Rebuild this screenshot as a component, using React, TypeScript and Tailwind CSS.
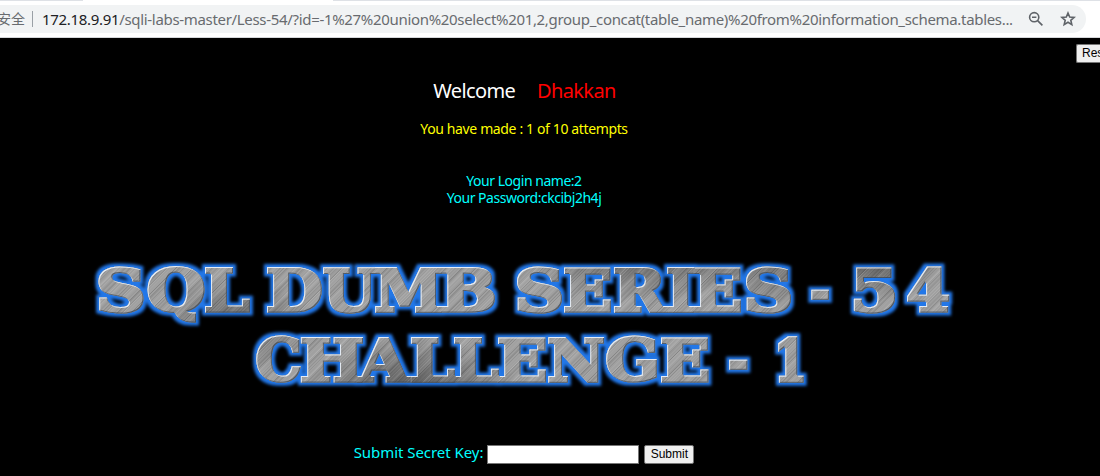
import { useMemo } from "react";

type Glyph = [char: string, left: number, right: number, top?: number, bottom?: number];

const CAP = 46;

// Each glyph: character, left and right ink edges, and ink top and bottom where they differ from cap height.
const LINE_ONE: Glyph[] = [
  ["S", 98.5, 143.5, -1, 47],
  ["Q", 147.5, 204.5, -1, 56],
  ["L", 205, 250],
  ["D", 267, 322],
  ["U", 323, 377, 0, 47],
  ["M", 375, 442],
  ["B", 441, 495],
  ["S", 517, 562, -1, 47],
  ["E", 564, 611],
  ["R", 614, 668],
  ["I", 667, 694],
  ["E", 694, 741],
  ["S", 746, 791, -1, 47],
  ["-", 811, 829, 23, 33],
  ["5", 854, 895.5, 0, 47],
  ["4", 907, 949],
];

const LINE_TWO: Glyph[] = [
  ["C", 256, 300.5, -2, 46],
  ["H", 301, 363],
  ["A", 357, 411],
  ["L", 411, 455],
  ["L", 454, 499],
  ["E", 498, 546],
  ["N", 548, 604],
  ["G", 606, 656.5, -2, 46],
  ["E", 661, 708.5],
  ["-", 729, 747.5, 23, 33],
  ["1", 778, 804],
];

const STROKE = 3.4;

function placeGlyphs(line: Glyph[], y: number) {
  const ctx = document.createElement("canvas").getContext("2d")!;
  ctx.font = 'bold 200px "DejaVu Serif", serif';
  return line.map(([char, left, right, top = 0, bottom = CAP]) => {
    const m = ctx.measureText(char);
    const inkW = m.actualBoundingBoxRight + m.actualBoundingBoxLeft;
    const inkH = m.actualBoundingBoxAscent + m.actualBoundingBoxDescent;
    const sx = (right - left - STROKE) / inkW;
    const sy = (bottom - top - STROKE) / inkH;
    const tx = left + STROKE / 2 + m.actualBoundingBoxLeft * sx;
    const ty = y + top + STROKE / 2 + m.actualBoundingBoxAscent * sy;
    return { char, transform: `matrix(${sx} 0 0 ${sy} ${tx} ${ty})` };
  });
}

// Diagonal scratches of the brushed metal, light and dark, spread unevenly.
const SCRATCHES = Array.from({ length: 420 }, (_, i) => ({
  x: -60 + i * 2.5 + ((i * 7) % 5) * 0.4,
  light: (i * 13) % 7 < 3,
  opacity: 0.05 + ((i * 11) % 6) * 0.026,
}));

const SHADES = [
  { cx: 235, cy: 325, rx: 80, ry: 50, opacity: 0.5 },
  { cx: 410, cy: 392, rx: 110, ry: 55, opacity: 0.65 },
  { cx: 640, cy: 256, rx: 120, ry: 45, opacity: 0.5 },
  { cx: 770, cy: 266, rx: 75, ry: 45, opacity: 0.35 },
  { cx: 875, cy: 258, rx: 70, ry: 42, opacity: 0.65 },
];

function Banner() {
  const glyphs = useMemo(() => [...placeGlyphs(LINE_ONE, 267), ...placeGlyphs(LINE_TWO, 336.5)], []);
  return (
    <svg width="872" height="146" viewBox="88 250 872 146" className="block shrink-0">
      <defs>
        <filter id="glow" filterUnits="userSpaceOnUse" x="80" y="245" width="890" height="155" colorInterpolationFilters="sRGB">
          <feMorphology in="SourceAlpha" operator="dilate" radius="3" result="fat" />
          <feGaussianBlur in="fat" stdDeviation="1.6" result="soft" />
          <feFlood floodColor="#2277e8" />
          <feComposite in2="soft" operator="in" result="blue" />
          <feMerge>
            <feMergeNode in="blue" />
            <feMergeNode in="SourceGraphic" />
          </feMerge>
        </filter>
        <filter id="bevel" filterUnits="userSpaceOnUse" x="80" y="245" width="890" height="155" colorInterpolationFilters="sRGB">
          <feOffset in="SourceAlpha" dx="0.8" dy="0.8" result="down" />
          <feComposite in="SourceAlpha" in2="down" operator="out" result="lightEdge" />
          <feFlood floodColor="#eef6ff" floodOpacity="0.9" />
          <feComposite in2="lightEdge" operator="in" result="light" />
          <feOffset in="SourceAlpha" dx="-0.7" dy="-0.7" result="up" />
          <feComposite in="SourceAlpha" in2="up" operator="out" result="darkEdge" />
          <feFlood floodColor="#3b4656" floodOpacity="0.75" />
          <feComposite in2="darkEdge" operator="in" result="dark" />
          <feMerge>
            <feMergeNode in="SourceGraphic" />
            <feMergeNode in="dark" />
            <feMergeNode in="light" />
          </feMerge>
        </filter>
        <radialGradient id="shade">
          <stop offset="0" stopColor="#303030" />
          <stop offset="1" stopColor="#303030" stopOpacity="0" />
        </radialGradient>
        <mask id="letters" maskUnits="userSpaceOnUse" x="80" y="245" width="890" height="155">
          <use href="#lettering" fill="#fff" stroke="#fff" />
        </mask>
      </defs>
      <g filter="url(#glow)" fill="#8b8b8b" stroke="#8b8b8b">
        <g id="lettering" fontFamily='"DejaVu Serif", serif' fontWeight="bold" fontSize="200" strokeLinejoin="miter">
          {glyphs.map((g, i) => (
            <text key={i} transform={g.transform} vectorEffect="non-scaling-stroke" strokeWidth={STROKE}>
              {g.char}
            </text>
          ))}
        </g>
      </g>
      <g filter="url(#bevel)">
        <g mask="url(#letters)">
          <rect x="88" y="250" width="872" height="146" fill="#a0a0a0" />
          {SHADES.map(({ opacity, ...ellipse }, i) => (
            <ellipse key={i} {...ellipse} fill="url(#shade)" opacity={opacity} />
          ))}
          {SCRATCHES.map((s, i) => (
            <path key={i} d={`M${s.x} 396l146-146`} stroke={s.light ? "#fff" : "#000"} strokeWidth="1" opacity={s.opacity} />
          ))}
        </g>
      </g>
    </svg>
  );
}

function AddressBar() {
  return (
    <header className="h-[38px] shrink-0 border-b border-[#d5d7da] bg-white">
      <div className="flex h-[5px] items-start justify-between">
        <div className="h-px w-[83px] bg-[#dee1e6]" />
        <div className="h-px w-[767px] bg-[#dee1e6]" />
      </div>
      <div className="flex h-7 w-[1086px] items-center rounded-r-full bg-[#f1f3f4] font-['Noto_Sans','Noto_Sans_CJK_SC',sans-serif] text-[15px] leading-7 tracking-[-0.32px] text-[#686b6f]">
        <span className="-ml-[3px] w-7 shrink-0 whitespace-nowrap text-[14px] tracking-normal">安全</span>
        <span className="ml-[7px] h-4 w-px shrink-0 bg-[#9aa0a6]" />
        <span className="ml-[9px] w-[974px] shrink-0 whitespace-nowrap">
          <span className="text-[#202124]">172.18.9.91</span>
          /sqli-labs-master/Less-54/?id=-1%27%20union%20select%201,2,group_concat(table_name)%20from%20information_schema.tables...
        </span>
        <svg className="ml-3 shrink-0" width="16" height="16" viewBox="0 0 16 16" fill="none" stroke="#5f6368" strokeWidth="1.6">
          <circle cx="6.2" cy="6.2" r="4.6" />
          <path d="M9.6 9.6 14.4 14.4M4 6.2h4.4" />
        </svg>
        <svg className="ml-4 shrink-0" width="16" height="16" viewBox="0 0 16 16" fill="none" stroke="#5f6368" strokeWidth="1.6">
          <path d="m8 2 1.7 4 4.4.4-3.3 2.9 1 4.3L8 11.3l-3.8 2.3 1-4.3-3.3-2.9 4.4-.4z" />
        </svg>
      </div>
    </header>
  );
}

export default function App() {
  return (
    <div className="flex h-[476px] w-[1100px] flex-col overflow-hidden bg-black font-['Noto_Sans',sans-serif]">
      <AddressBar />
      <div className="flex h-[25px] shrink-0 justify-end pt-1.5">
        <button className="h-[19px] w-6 overflow-hidden whitespace-nowrap rounded-l-[2px] border border-r-0 border-[#767676] bg-[#efefef] pl-[5px] text-left font-['Liberation_Sans',sans-serif] text-[12px] leading-[17px] text-black">
          Res
        </button>
      </div>
      <main className="flex w-[1048px] flex-col items-center">
        <h1 className="mt-[14px] flex h-7 gap-[22px] whitespace-nowrap pl-px text-[20px] leading-7 tracking-[-0.65px]">
          <span className="text-white">Welcome</span>
          <span className="text-[#f00]">Dhakkan</span>
        </h1>
        <p className="mt-[14px] h-5 whitespace-nowrap text-[14px] leading-5 tracking-[-0.37px] text-[#ff0]">You have made : 1 of 10 attempts</p>
        <div className="mt-[33px] h-[34px] whitespace-nowrap text-center text-[14px] leading-[17px] tracking-[-0.47px] text-[#0ff]">
          <p>Your Login name:2</p>
          <p>Your Password:ckcibj2h4j</p>
        </div>
        <div className="mt-11">
          <Banner />
        </div>
        <form className="mt-[46px] flex h-5 items-center whitespace-nowrap">
          <label className="text-[15px] leading-5 tracking-[-0.05px] text-[#0ff]">Submit Secret Key:</label>
          <input className="ml-1 mt-1 h-[19px] w-[152px] border border-[#767676] bg-white" />
          <button type="button" className="ml-[5px] mt-1 h-[19px] w-[50px] rounded-[2px] border border-[#767676] bg-[#efefef] text-center font-['Liberation_Sans',sans-serif] text-[12px] leading-[17px] text-black">
            Submit
          </button>
        </form>
      </main>
    </div>
  );
}
